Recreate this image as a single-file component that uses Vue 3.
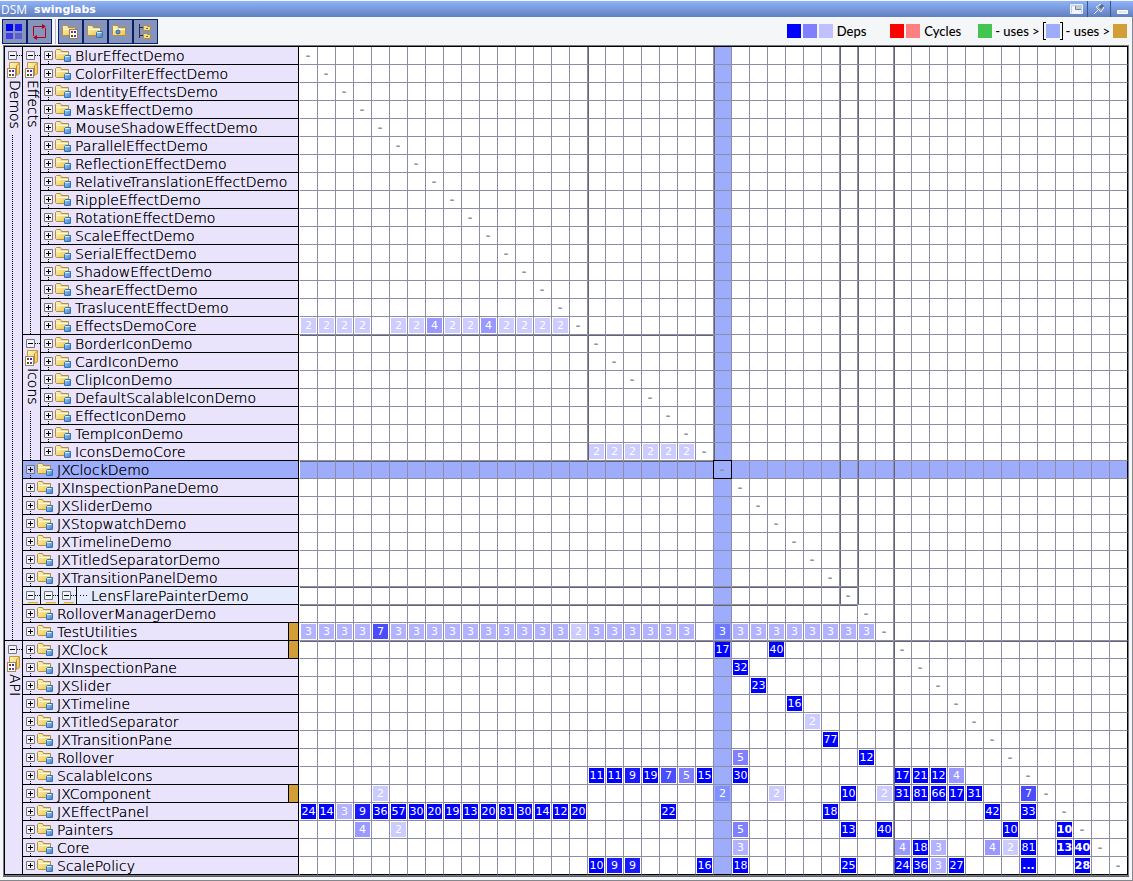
<script setup>
const tree = [
  ...['BlurEffectDemo', 'ColorFilterEffectDemo', 'IdentityEffectsDemo', 'MaskEffectDemo', 'MouseShadowEffectDemo',
    'ParallelEffectDemo', 'ReflectionEffectDemo', 'RelativeTranslationEffectDemo', 'RippleEffectDemo',
    'RotationEffectDemo', 'ScaleEffectDemo', 'SerialEffectDemo', 'ShadowEffectDemo', 'ShearEffectDemo',
    'TraslucentEffectDemo', 'EffectsDemoCore', 'BorderIconDemo', 'CardIconDemo', 'ClipIconDemo',
    'DefaultScalableIconDemo', 'EffectIconDemo', 'TempIconDemo', 'IconsDemoCore'].map((name) => ({ name, span: 1 })),
  ...['JXClockDemo', 'JXInspectionPaneDemo', 'JXSliderDemo', 'JXStopwatchDemo', 'JXTimelineDemo',
    'JXTitledSeparatorDemo', 'JXTransitionPanelDemo', 'LensFlarePainterDemo', 'RolloverManagerDemo',
    'TestUtilities', 'JXClock', 'JXInspectionPane', 'JXSlider', 'JXTimeline', 'JXTitledSeparator',
    'JXTransitionPane', 'Rollover', 'ScalableIcons', 'JXComponent', 'JXEffectPanel', 'Painters', 'Core',
    'ScalePolicy'].map((name) => ({ name, span: 2 })),
]

const SELECTED = 23
const NESTED = 30
const lastChildren = [15, 22, 32, 45]
const providers = [32, 33, 41]

const outerGroups = { 0: { name: 'Demos', rows: 33, line: true }, 33: { name: 'API', rows: 13, line: false } }
const innerGroups = { 0: { name: 'Effects', rows: 16, line: true }, 16: { name: 'Icons', rows: 7, line: true } }

const seq = (start, values) => Object.fromEntries(values.map((v, i) => [start + i, v]))

const deps = {
  15: seq(0, [2, 2, 2, 2, 0, 2, 2, 4, 2, 2, 4, 2, 2, 2, 2]),
  22: seq(16, [2, 2, 2, 2, 2, 2]),
  32: seq(0, [3, 3, 3, 3, 7, 3, 3, 3, 3, 3, 3, 3, 3, 3, 3, 2, 3, 3, 3, 3, 3, 3, 0, 3, 3, 3, 3, 3, 3, 3, 3, 3]),
  33: { 23: 17, 26: 40 },
  34: { 24: 32 },
  35: { 25: 23 },
  36: { 27: 16 },
  37: { 28: 2 },
  38: { 29: 77 },
  39: { 24: 5, 31: 12 },
  40: { ...seq(16, [11, 11, 9, 19, 7, 5, 15]), 24: 30, ...seq(33, [17, 21, 12, 4]) },
  41: { 4: 2, 23: 2, 26: 2, 30: 10, ...seq(32, [2, 31, 81, 66, 17, 31]), 40: 7 },
  42: { ...seq(0, [24, 14, 3, 9, 36, 57, 30, 20, 19, 13, 20, 81, 30, 14, 12, 20]), 20: 22, 29: 18, 38: 42, 40: 33 },
  43: { 3: 4, 5: 2, 24: 5, 30: 13, 32: 40, 39: 10, 42: 10 },
  44: { 24: 3, 33: 4, 34: 18, 35: 3, 38: 4, 39: 2, 40: 81, 42: 13, 43: 40 },
  45: { 16: 10, 17: 9, 18: 9, 22: 16, 24: 18, 30: 25, 33: 24, 34: 36, 35: 3, 36: 27, 40: '...', 43: 28 },
}
const strong = ['43-42', '44-42', '44-43', '45-40', '45-43']

const value = (r, c) => deps[r]?.[c] || ''
const level = (v) => (v === '...' || v >= 10 ? 'd10' : `d${v}`)

function cellClass(r, c) {
  return {
    sel: r === SELECTED || c === SELECTED,
    focus: r === SELECTED && c === SELECTED,
    vline: ((c === 16 || c === 23) && r < 23) || ((c === 30 || c === 31) && r < 31) || c === 33,
    hline: ((r === 16 || r === 23) && c < 23) || ((r === 30 || r === 31) && c < 31) || r === 33,
  }
}
</script>

<template>
  <main class="window">
    <svg class="defs" aria-hidden="true">
      <defs>
        <linearGradient id="gold" x1="0" y1="0" x2="1" y2="1">
          <stop offset="0" stop-color="#fff6b8" /><stop offset="1" stop-color="#ecc34c" />
        </linearGradient>
        <linearGradient id="can" x1="0" y1="0" x2="1" y2="1">
          <stop offset="0" stop-color="#b4daf8" /><stop offset="1" stop-color="#3376bd" />
        </linearGradient>
        <symbol id="folder" viewBox="0 0 17 15">
          <path d="M.5 10.5V2.5L1.5 1.5H5.5L6.5 3.5H13.5V11.5H1.5Z" fill="url(#gold)" stroke="#b28d45" />
          <path d="M1.5 5.5H13" stroke="#fffbe0" />
        </symbol>
        <symbol id="folder-can" viewBox="0 0 17 15">
          <use href="#folder" width="17" height="15" />
          <rect x="9" y="7" width="7" height="7" rx="1" fill="url(#can)" />
          <path d="M9.5 13V8.5L10.5 7.5H15.5V12.5L14.5 13.5H9.5" fill="none" stroke="#2f73b8" />
          <path d="M10 8.5H14.5" stroke="#d6edfc" />
        </symbol>
        <symbol id="folder-grid" viewBox="0 0 17 15">
          <use href="#folder" width="17" height="15" />
          <rect x="7.5" y="5.5" width="8" height="9" fill="#fff" stroke="#9b8055" />
          <path d="M9 7h2v2H9z" fill="#d01818" /><path d="M12 7h2v2h-2z" fill="#3030d0" />
          <path d="M9 11h2v2H9z" fill="#187818" /><path d="M12 11h2v2h-2z" fill="#803090" />
        </symbol>
        <symbol id="package" viewBox="0 0 14 17">
          <path d="M2.5.5H12.5V11.5L9.5 13.5H2.5Z" fill="url(#gold)" stroke="#c39745" />
          <path d="M9.5 3.5V13M10 3.5L12.5 1" stroke="#b98c35" fill="none" />
          <rect x=".5" y="6.5" width="8" height="9" fill="#fff" stroke="#a08a68" />
          <path d="M2 8h2v2H2z" fill="#d01818" /><path d="M5 8h2v2H5z" fill="#3030d0" />
          <path d="M2 12h2v2H2z" fill="#187818" /><path d="M5 12h2v2H5z" fill="#803090" />
        </symbol>
        <symbol id="plus" viewBox="0 0 9 17">
          <path d="M.5 4.5h8v8h-8z" fill="#fff" fill-opacity=".45" stroke="#777" />
          <path d="M2 8.5h5M4.5 6v5" stroke="#000" />
        </symbol>
        <symbol id="minus" viewBox="0 0 14 17">
          <path d="M.5 4.5h8v8h-8z" fill="#fff" fill-opacity=".45" stroke="#777" />
          <path d="M2 8.5h5M9 8.5h1M11 8.5h1M13 8.5h1" stroke="#000" />
        </symbol>
      </defs>
    </svg>

    <header class="titlebar">
      <h1 class="title"><span>DSM</span><strong>swinglabs</strong></h1>
      <div class="controls">
        <button type="button" aria-label="Restore">
          <svg width="13" height="11"><path d="M.5.5h12v9H.5z" fill="#c3cbd8" stroke="#eef2fa" /><path d="M2 2h3v4h6v3H2z" fill="#f3f5f8" /><path d="M5.5 2v3.500H11" stroke="#6f86b4" fill="none" /></svg>
        </button>
        <button type="button" aria-label="Pin">
          <svg width="12" height="12"><path d="M1 11L5 7" stroke="#e8ecf4" stroke-width="1" /><path d="M3 4l5 5 1-2 2-2-4-4-2 2z" fill="#9aa8c4" stroke="#dfe5f1" /><path d="M6 4l3-3 2 2-3 3z" fill="#546a96" /></svg>
        </button>
        <button type="button" aria-label="Minimize">
          <svg width="11" height="11"><path d="M.5 6.5h10v3H.5z" fill="#e4e6ea" stroke="#fff" /></svg>
        </button>
      </div>
    </header>

    <div class="toolbar">
      <div class="group">
        <button type="button" aria-label="Matrix">
          <svg width="17" height="17"><path d="M0 1h7v7H0z" fill="#0000f6" /><path d="M9 1h7v7H9z" fill="#1c1cf2" /><path d="M0 10h7v6H0z" fill="#3e3ee2" /><path d="M9 10h7v6H9z" fill="#5c62cd" /></svg>
        </button>
        <button type="button" aria-label="Cycles">
          <svg width="17" height="17"><path d="M2.5 13V3.5H13M14.5 5V14.5H5" fill="none" stroke="#b3001b" /><path d="M11 1l4 2.5-4 2.5zM6 12l-4 2.5 4 2.5z" fill="#b3001b" /></svg>
        </button>
      </div>
      <div class="group sep">
        <button type="button" aria-label="Packages"><svg width="17" height="15"><use href="#folder-grid" /></svg></button>
        <button type="button" aria-label="Libraries"><svg width="17" height="15"><use href="#folder-can" /></svg></button>
        <button type="button" aria-label="Folders">
          <svg width="17" height="15"><use href="#folder" /><circle cx="6" cy="8" r="2" fill="#4f9be0" stroke="#2d66a3" /></svg>
        </button>
        <button type="button" aria-label="Tree">
          <svg width="15" height="17"><path d="M1.5 1v14M2 4.5h3M2 12.5h3" stroke="#222c55" /><path d="M5.5 2.5h3l1 1h3v4h-7zM5.5 10.5h3l1 1h3v4h-7z" fill="#f6dc7a" stroke="#b28d45" /><path d="M8 5h2v1H8zM8 13h2v1H8z" fill="#4a76b0" /></svg>
        </button>
      </div>
      <div class="legend">
        <div class="item"><i class="sw d10" /><i class="sw d5" /><i class="sw faint" /><span>Deps</span></div>
        <div class="item"><i class="sw red" /><i class="sw pink" /><span>Cycles</span></div>
        <div class="item uses"><i class="sw green" /><span>- uses &gt;</span>
          <span class="bracket"><i class="sw blue" /></span>
          <span>- uses &gt;</span><i class="sw gold" /></div>
      </div>
    </div>

    <div class="frame">
      <table>
        <colgroup>
          <col class="c18"><col class="c18"><col>
          <col class="c19"><col v-for="c in 45" :key="c" class="c18">
        </colgroup>
        <tbody>
          <tr v-for="(row, r) in tree" :key="r" :class="{ selected: r === SELECTED }">
            <th v-if="outerGroups[r]" class="branch" :class="{ dotted: outerGroups[r].line }" scope="rowgroup" :rowspan="outerGroups[r].rows">
              <div class="stem">
                <button type="button" :aria-label="`Collapse ${outerGroups[r].name}`"><svg width="14" height="15" viewBox="0 0 14 15"><use href="#minus" width="14" height="17" /></svg></button>
                <svg width="14" height="17"><use href="#package" /></svg>
                <span>{{ outerGroups[r].name }}</span>
              </div>
            </th>
            <th v-if="innerGroups[r]" class="branch" :class="{ dotted: innerGroups[r].line }" scope="rowgroup" :rowspan="innerGroups[r].rows">
              <div class="stem">
                <button type="button" :aria-label="`Collapse ${innerGroups[r].name}`"><svg width="14" height="15" viewBox="0 0 14 15"><use href="#minus" width="14" height="17" /></svg></button>
                <svg width="14" height="17"><use href="#package" /></svg>
                <span>{{ innerGroups[r].name }}</span>
              </div>
            </th>
            <th class="label" :class="{ nested: r === NESTED }" scope="row" :colspan="row.span">
              <div v-if="r === NESTED" class="row">
                <span v-for="n in 3" :key="n" class="cellbtn">
                  <button type="button" :aria-label="`Collapse level ${n}`"><svg width="14" height="17"><use href="#minus" /><path d="M2 15.5h10" stroke="#d9ad4e" /><path d="M1 16.5h11" stroke="#f3d886" /></svg></button>
                </span>
                <i class="leader" />
                <span class="name">{{ row.name }}</span>
              </div>
              <div v-else class="row plain">
                <button type="button" :aria-label="`Expand ${row.name}`">
                  <svg width="9" height="17"><use href="#plus" /><path v-if="!lastChildren.includes(r)" d="M4.5 14v1M4.5 16v1" stroke="#000" /></svg>
                </button>
                <svg class="folder" width="17" height="15"><use href="#folder-can" /></svg>
                <span class="name">{{ row.name }}</span>
                <i v-if="providers.includes(r)" class="tag" />
              </div>
            </th>
            <td v-for="(col, c) in tree" :key="c" :class="cellClass(r, c)">
              <span v-if="r === c" class="dash">-</span>
              <span v-else-if="value(r, c)" class="dep" :class="[level(value(r, c)), { strong: strong.includes(`${r}-${c}`) }]">{{ value(r, c) }}</span>
            </td>
          </tr>
        </tbody>
      </table>
    </div>
  </main>
</template>

<style>
body {
  margin: 0;
  background: #f4f6f7;
}
</style>

<style scoped>
.window {
  border-bottom: 1px solid #85878c;
  padding-top: 1px;
  background: #f4f6f7;
  color: #000;
}
.defs {
  position: absolute;
  width: 0;
  height: 0;
}
svg {
  display: block;
  flex: none;
}
button {
  display: block;
  flex: none;
  margin: 0;
  padding: 0;
  border: 0;
  background: none;
}

.titlebar {
  display: flex;
  justify-content: space-between;
  height: 16px;
  background: linear-gradient(#90b2fa, #5f7fbd);
  color: #fff;
}
.title {
  display: flex;
  gap: 7px;
  margin: 0;
  padding-left: 1px;
  font: 12px/18px "Open Sans", sans-serif;
}
.title strong {
  font: bold 11px/17px "DejaVu Sans", sans-serif;
}
.controls {
  display: flex;
}
.controls button {
  display: flex;
  align-items: center;
  justify-content: center;
  width: 23px;
  border-left: 1px solid #39548f;
}
.controls button:first-child {
  border-left-color: transparent;
}

.toolbar {
  display: flex;
  align-items: flex-start;
  height: 26px;
  padding: 2px 5px 0 2px;
  border-right: 1px solid #85878c;
}
.group {
  display: flex;
}
.group.sep {
  margin-left: 3px;
  padding-left: 2px;
  border-left: 1px solid #b9bbbf;
}
.group button {
  display: flex;
  align-items: center;
  justify-content: center;
  width: 25px;
  height: 25px;
  box-sizing: border-box;
  border: 1px solid #06206e;
  background: #8694bb;
}
.legend {
  display: flex;
  margin-left: auto;
  font: 500 13px/24px Lato, "Open Sans", sans-serif;
  height: 24px;
}
.item {
  display: flex;
  align-items: center;
  gap: 2px;
  margin-left: 24px;
}
.item > span {
  margin-left: 2px;
}
.uses {
  gap: 3px;
  margin-left: 17px;
}
.uses > span {
  margin-left: 0;
}
.sw {
  width: 14px;
  height: 14px;
}
.bracket {
  display: flex;
  align-items: center;
  justify-content: center;
  width: 20px;
  height: 18px;
  background:
    linear-gradient(#000, #000) 0 0 / 3px 1px,
    linear-gradient(#000, #000) 0 100% / 3px 1px,
    linear-gradient(#000, #000) 100% 0 / 3px 1px,
    linear-gradient(#000, #000) 100% 100% / 3px 1px,
    linear-gradient(#000, #000) 0 0 / 1px 100%,
    linear-gradient(#000, #000) 100% 0 / 1px 100%;
  background-repeat: no-repeat;
}
.faint { background: #c0c0ff; }
.red { background: #f00; }
.pink { background: #ff8080; }
.green { background: #43c551; }
.blue { background: #9dadfc; }
.gold { background: #d29f37; }

.frame {
  padding: 1px 4px 5px;
  border-right: 1px solid #85878c;
}
table {
  width: 100%;
  table-layout: fixed;
  border-collapse: separate;
  border-spacing: 0;
  border-top: 1px solid #000;
  border-left: 1px solid #000;
  box-shadow: 0 0 0 1px #777a82, 0 1px 0 1px #5a5e68;
}
.c18 { width: 18px; }
.c19 { width: 19px; }
tr {
  height: 18px;
}
th,
td {
  padding: 0;
  box-sizing: border-box;
}
th {
  border-right: 1px solid #000;
  border-bottom: 1px solid #000;
  background: #e9e4fb;
  font: 200 14px/17px "DejaVu Sans", sans-serif;
  text-align: left;
  text-shadow: 0 0 #000;
}
.selected .label {
  background: #9dadfc;
}
.branch {
  vertical-align: top;
}
.branch.dotted {
  background: repeating-linear-gradient(#000 0 1px, transparent 1px 2px) 7px 0 / 1px 100% no-repeat #e9e4fb;
}
.stem {
  display: flex;
  flex-direction: column;
  padding: 0 0 6px 3px;
  background: #e9e4fb;
}
.stem svg {
  margin-left: -1px;
}
.stem button svg {
  margin-left: 0;
}
.stem span {
  writing-mode: vertical-rl;
  width: 14px;
  padding-top: 1px;
  line-height: 14px;
}
.row {
  display: flex;
  align-items: center;
  height: 17px;
  white-space: nowrap;
}
.name {
  padding-top: 2px;
}
.plain {
  padding-left: 3px;
}
.folder {
  margin: 0 3px 0 2px;
}
.cellbtn {
  display: flex;
  padding-left: 3px;
  box-sizing: border-box;
  border-right: 1px solid #000;
  flex: 0 0 18px;
}
.nested {
  background: #e6eafd;
}
.leader {
  width: 9px;
  height: 1px;
  margin: 0 2px 0 3px;
  background: repeating-linear-gradient(90deg, #000 0 1px, transparent 1px 3px);
}
.tag {
  align-self: stretch;
  width: 9px;
  margin-left: auto;
  border-left: 1px solid #000;
  background: #d29f37;
}

td {
  height: 18px;
  border-right: 1px solid #8d8da5;
  border-bottom: 1px solid #8d8da5;
  background: #fff;
  text-align: center;
  font: 11px/15px "DejaVu Sans", sans-serif;
}
th + td {
  border-left: 1px solid #fff;
}
td:last-child {
  border-right-color: #000;
}
tr:last-child td {
  border-bottom-color: #000;
}
.vline { box-shadow: inset 1px 0 #636573; }
.hline { box-shadow: inset 0 1px #636573; }
.vline.hline { box-shadow: inset 1px 1px #636573; }
.sel {
  background: #9dadfc;
}
.focus {
  position: relative;
}
.focus::after {
  content: "";
  position: absolute;
  inset: -1px;
  border: 1px solid #000;
}
.dash {
  display: block;
  padding-right: 1px;
  color: #8d8da5;
  font-weight: bold;
}
.dep {
  display: flex;
  justify-content: center;
  height: 15px;
  margin: 0 1px;
  color: #fff;
}
.strong {
  font-weight: bold;
}
.d2 { background: #ccf; }
.d3 { background: #b2b2ff; }
.d4 { background: #99f; }
.d5 { background: #8080ff; }
.d7 { background: #4c4cff; }
.d9 { background: #1a1aff; }
.d10 { background: #00f; }
.sel .d2 { background: #8091ff; }
.sel .d3 { background: #6c78ff; }
</style>
